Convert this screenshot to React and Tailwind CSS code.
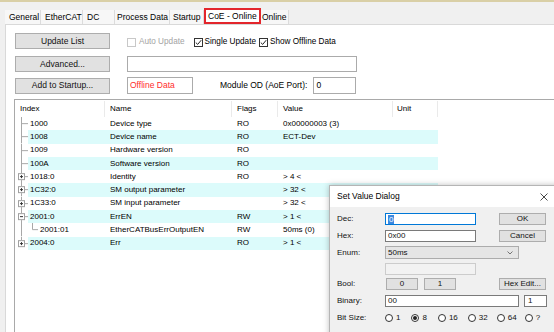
import React from "react";

const tabs = [
  { label: "General", w: "w-[36px]", pl: "pl-[4px]" },
  { label: "EtherCAT", w: "w-[42px]", pl: "pl-[4px]" },
  { label: "DC", w: "w-[32px]", pl: "pl-[4px]" },
  { label: "Process Data", w: "w-[55px]", pl: "pl-[2px]" },
  { label: "Startup", w: "w-[34px]", pl: "pl-[3px]" },
  { label: "CoE - Online", w: "w-[57px]", pl: "pl-[2px]", active: true },
  { label: "Online", w: "w-[28px]", pl: "pl-[1px]" },
];

const rows = [
  { idx: "1000", name: "Device type", flags: "RO", value: "0x00000003 (3)", tree: "line" },
  { idx: "1008", name: "Device name", flags: "RO", value: "ECT-Dev", tree: "line" },
  { idx: "1009", name: "Hardware version", flags: "RO", value: "", tree: "line" },
  { idx: "100A", name: "Software version", flags: "RO", value: "", tree: "line" },
  { idx: "1018:0", name: "Identity", flags: "RO", value: "> 4 <", tree: "plus" },
  { idx: "1C32:0", name: "SM output parameter", flags: "", value: "> 32 <", tree: "plus" },
  { idx: "1C33:0", name: "SM input parameter", flags: "", value: "> 32 <", tree: "plus" },
  { idx: "2001:0", name: "ErrEN", flags: "RW", value: "> 1 <", tree: "minus" },
  { idx: "2001:01", name: "EtherCATBusErrOutputEN", flags: "RW", value: "50ms (0)", tree: "child" },
  { idx: "2004:0", name: "Err", flags: "RO", value: "> 1 <", tree: "plus", last: true },
];

const Check = ({ checked, disabled }) => (
  <span
    className={`inline-flex h-[9px] w-[9px] items-center justify-center border ${
      disabled ? "border-[#c8c8c8] bg-white" : "border-[#333] bg-white"
    }`}
  >
    {checked && (
      <svg width="7" height="7" viewBox="0 0 7 7">
        <path d="M0.8 3.6 L2.7 5.4 L6.2 1.2" fill="none" stroke="#222" strokeWidth="1" />
      </svg>
    )}
  </span>
);

// tree connector drawn in the first 13px of each row
const Tree = ({ kind, last }) => {
  const c = "#a8a8a8";
  const mid = 6.65;
  return (
    <svg width="13" height="13.3" className="shrink-0">
      {kind === "line" || kind === "child" ? (
        <line x1="6.5" y1="0" x2="6.5" y2="13.3" stroke={c} strokeWidth="1" />
      ) : (
        <>
          <line x1="6.5" y1="0" x2="6.5" y2="3.2" stroke={c} strokeWidth="1" />
          {!last && <line x1="6.5" y1="10.1" x2="6.5" y2="13.3" stroke={c} strokeWidth="1" />}
          <rect x="3.5" y="3.65" width="6" height="6" fill="white" stroke="#a0a0a0" strokeWidth="1" />
          <line x1="5" y1={mid} x2="8" y2={mid} stroke="#333" strokeWidth="1" />
          {kind === "plus" && <line x1="6.5" y1="5.15" x2="6.5" y2="8.15" stroke="#333" strokeWidth="1" />}
        </>
      )}
      {kind === "line" && <line x1="6.5" y1={mid} x2="13" y2={mid} stroke={c} strokeWidth="1" />}
      {(kind === "plus" || kind === "minus") && (
        <line x1="9.5" y1={mid} x2="13" y2={mid} stroke={c} strokeWidth="1" />
      )}
    </svg>
  );
};

const Btn = ({ children, className = "" }) => (
  <div
    className={`flex items-center justify-center border border-[#adadad] bg-[#e1e1e1] text-[#111] ${className}`}
  >
    {children}
  </div>
);

const Radio = ({ on, label, className = "" }) => (
  <div className={`flex items-center ${className}`}>
    <span className="flex h-[8px] w-[8px] items-center justify-center rounded-full border border-[#333] bg-white">
      {on && <span className="h-[4px] w-[4px] rounded-full bg-[#222]" />}
    </span>
    <span className="ml-[3px]">{label}</span>
  </div>
);

export default function App() {
  return (
    <div
      className="relative flex h-[332px] w-[554px] flex-col overflow-hidden bg-[#f0f0f0] text-[8.5px] text-black"
      style={{ fontFamily: '"Liberation Sans", Arial, sans-serif' }}
    >
      <div className="h-[2px] bg-[#d9cfa6]" />

      {/* tab strip */}
      <div className="flex h-[22px] items-end pl-[5px]">
        {tabs.map((t) =>
          t.active ? (
            <div
              key={t.label}
              className={`${t.w} ${t.pl} flex h-[16px] items-center border-2 border-[#e3262c] bg-white`}
            >
              {t.label}
            </div>
          ) : (
            <div
              key={t.label}
              className={`${t.w} ${t.pl} flex h-[14px] items-center border-r border-[#dcdcdc] bg-[#f7f7f7] pt-[1px]`}
            >
              {t.label}
            </div>
          )
        )}
      </div>

      {/* panel */}
      <div className="ml-[5px] flex flex-1 flex-col border-l border-t border-[#d9d9d9] bg-white">
        <div className="flex flex-col pl-[9px] pt-[8px]">
          <div className="flex h-[16px] items-center">
            <Btn className="h-[16px] w-[95px]">Update List</Btn>
            <div className="ml-[17px] flex items-center pt-[3px] text-[8.2px]">
              <Check disabled />
              <span className="ml-[3px] text-[#a3a3a3]">Auto Update</span>
              <span className="ml-[9px]" />
              <Check checked />
              <span className="ml-[2px]">Single Update</span>
              <span className="ml-[3px]" />
              <Check checked />
              <span className="ml-[2px]">Show Offline Data</span>
            </div>
          </div>
          <div className="mt-[7px] flex h-[16px] items-center">
            <Btn className="h-[16px] w-[95px]">Advanced...</Btn>
            <div className="ml-[17px] h-[16px] w-[230px] border border-[#ababab] bg-white" />
          </div>
          <div className="mt-[5px] flex h-[17px] items-center">
            <Btn className="h-[16px] w-[95px]">Add to Startup...</Btn>
            <div className="ml-[17px] flex h-[17px] w-[66px] items-center border border-[#ababab] bg-white pl-[2px] text-[#ff2b2b]">
              Offline Data
            </div>
            <span className="ml-[27px]">Module OD (AoE Port):</span>
            <div className="ml-[6px] flex h-[17px] w-[43px] items-center border border-[#ababab] bg-white pl-[2px]">
              0
            </div>
          </div>
        </div>

        {/* object list */}
        <div className="ml-[8px] mt-[5px] flex flex-1 flex-col border-l border-t border-[#a9a9a9] text-[8px]">
          <div className="flex h-[17px] items-center pt-[1px]">
            <div className="flex h-full w-[90px] items-center border-r border-[#eaeaea] pl-[5px]">Index</div>
            <div className="flex h-full w-[127px] items-center border-r border-[#eaeaea] pl-[5px]">Name</div>
            <div className="flex h-full w-[46px] items-center border-r border-[#eaeaea] pl-[5px]">Flags</div>
            <div className="flex h-full w-[115px] items-center border-r border-[#eaeaea] pl-[5px]">Value</div>
            <div className="flex h-full w-[45px] items-center border-r border-[#eaeaea] pl-[4px]">Unit</div>
          </div>
          {rows.map((r, i) => (
            <div key={r.idx} className="flex h-[13.3px] items-center">
              <Tree kind={r.tree} last={r.last} />
              <div className={`flex h-full w-[410px] items-center ${i % 2 === 1 ? "bg-[#dcfbfb]" : ""}`}>
                <div className="flex h-full w-[77px] items-center">
                  {r.tree === "child" && (
                    <svg width="10" height="13.3" className="shrink-0">
                      <line x1="4.5" y1="0" x2="4.5" y2="6.65" stroke="#a8a8a8" strokeWidth="1" />
                      <line x1="4.5" y1="6.65" x2="10" y2="6.65" stroke="#a8a8a8" strokeWidth="1" />
                    </svg>
                  )}
                  <span className="pl-[2px]">{r.idx}</span>
                </div>
                <div className="w-[127px] pl-[5px]">{r.name}</div>
                <div className="w-[46px] pl-[5px]">{r.flags}</div>
                <div className="w-[115px] pl-[5px]">{r.value}</div>
                <div className="w-[45px]" />
              </div>
            </div>
          ))}
        </div>
      </div>

      {/* Set Value Dialog window */}
      <div className="absolute left-[329px] top-[185px] flex h-[160px] w-[240px] flex-col border border-[#b5b5b5] bg-[#f0f0f0] text-[8px] shadow-[0_0_6px_rgba(0,0,0,0.25)]">
        <div className="flex h-[21px] items-center justify-between bg-white pl-[7px] pr-[20px] text-[8.5px]">
          <span>Set Value Dialog</span>
          <svg width="8" height="8" viewBox="0 0 8 8">
            <path d="M0.5 0.5 L7.5 7.5 M7.5 0.5 L0.5 7.5" stroke="#333" strokeWidth="0.9" />
          </svg>
        </div>
        <div className="flex flex-col pl-[7px] pt-[6px] text-[#111]">
          <div className="flex h-[12px] items-center">
            <span className="w-[48px]">Dec:</span>
            <div className="flex h-[12px] w-[91px] items-center border border-[#0078d7] bg-white pl-[2px]">
              <span className="bg-[#3b88e0] px-[1px] leading-[9px] text-white">0</span>
            </div>
            <Btn className="ml-[23px] h-[12px] w-[47px] border-[#0078d7]">OK</Btn>
          </div>
          <div className="mt-[5px] flex h-[12px] items-center">
            <span className="w-[48px]">Hex:</span>
            <div className="flex h-[12px] w-[91px] items-center border border-[#7a7a7a] bg-white pl-[2px]">0x00</div>
            <Btn className="ml-[23px] h-[12px] w-[47px]">Cancel</Btn>
          </div>
          <div className="mt-[4px] flex h-[13px] items-center">
            <span className="w-[48px]">Enum:</span>
            <div className="flex h-[13px] w-[134px] items-center justify-between border border-[#acacac] bg-[#e5e5e5] pl-[2px] pr-[5px]">
              <span>50ms</span>
              <svg width="6" height="4" viewBox="0 0 6 4">
                <path d="M0.5 0.5 L3 3 L5.5 0.5" fill="none" stroke="#666" strokeWidth="0.9" />
              </svg>
            </div>
          </div>
          <div className="mt-[4px] flex h-[12px] items-center">
            <span className="w-[48px]" />
            <div className="h-[12px] w-[91px] border border-[#cccccc] bg-[#f2f2f2]" />
          </div>
          <div className="mt-[3px] flex h-[12px] items-center">
            <span className="w-[48px]">Bool:</span>
            <Btn className="ml-[1px] h-[12px] w-[32px]">0</Btn>
            <Btn className="ml-[6px] h-[12px] w-[32px]">1</Btn>
            <Btn className="ml-[43px] h-[12px] w-[47px]">Hex Edit...</Btn>
          </div>
          <div className="mt-[5px] flex h-[12px] items-center">
            <span className="w-[48px]">Binary:</span>
            <div className="flex h-[12px] w-[134px] items-center border border-[#7a7a7a] bg-white pl-[2px]">00</div>
            <div className="ml-[5px] flex h-[12px] w-[23px] items-center border border-[#7a7a7a] bg-white pl-[3px]">1</div>
          </div>
          <div className="mt-[5px] flex h-[12px] items-center">
            <span className="w-[48px]">Bit Size:</span>
            <Radio label="1" />
            <Radio on label="8" className="ml-[11px]" />
            <Radio label="16" className="ml-[11px]" />
            <Radio label="32" className="ml-[10px]" />
            <Radio label="64" className="ml-[9px]" />
            <Radio label="?" className="ml-[8px]" />
          </div>
        </div>
      </div>
    </div>
  );
}
